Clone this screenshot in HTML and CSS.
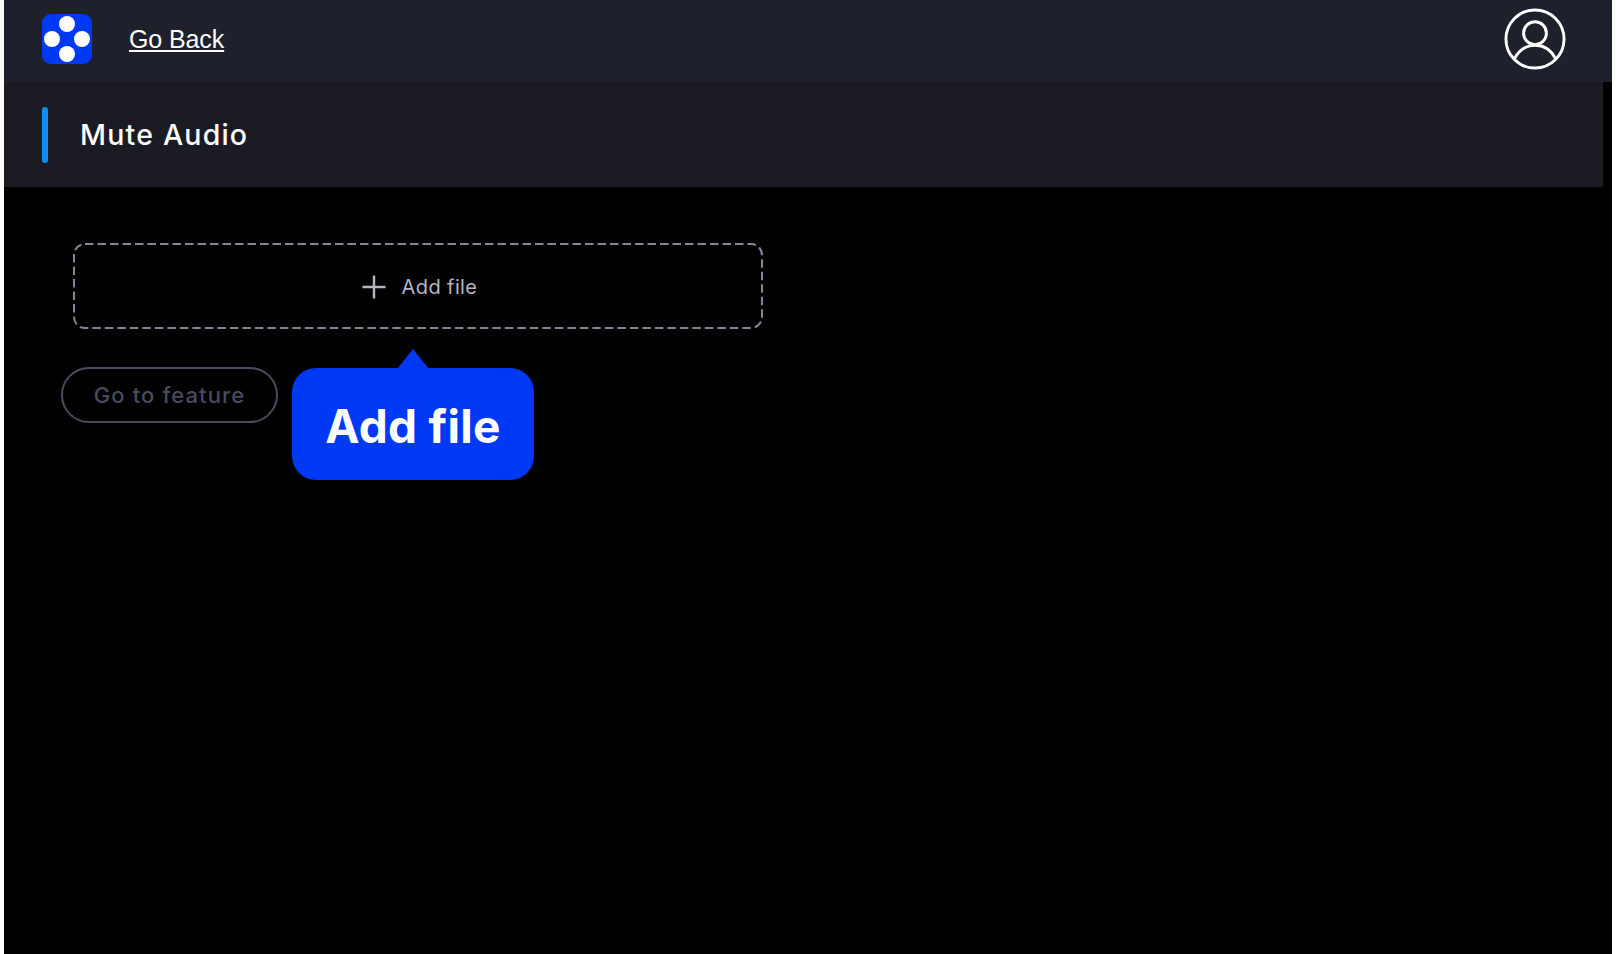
FILE: index.html
```html
<!DOCTYPE html>
<html lang="en">
<head>
<meta charset="utf-8">
<title>Mute Audio</title>
<link rel="stylesheet" href="styles.css">
</head>
<body>
<div class="app">
  <header class="topbar">
    <svg class="logo" viewBox="0 0 50 50" aria-hidden="true">
      <rect width="50" height="50" rx="9" fill="#0039f5"/>
      <circle cx="25" cy="10" r="8" fill="#fff"/>
      <circle cx="10" cy="25" r="8" fill="#fff"/>
      <circle cx="40" cy="25" r="8" fill="#fff"/>
      <circle cx="25" cy="40" r="8" fill="#fff"/>
    </svg>
    <a class="back" href="#">Go Back</a>
    <svg class="avatar" viewBox="0 0 64 64" fill="none" stroke="#fff" stroke-width="3" aria-hidden="true">
      <circle cx="32" cy="32" r="30"/>
      <circle cx="32" cy="26" r="11.800"/>
      <path d="M11 52C15.500 43.500 23 38.500 32 38.500s16.500 5 21 13.500"/>
    </svg>
  </header>
  <section class="titlebar">
    <span class="accent"></span>
    <h1 class="title">Mute Audio</h1>
  </section>
  <main class="content">
    <div class="dropzone">
      <svg class="dash" viewBox="0 0 690 86" fill="none" aria-hidden="true">
        <rect x="1" y="1" width="688" height="84" rx="11" stroke="#85859a" stroke-width="2" stroke-dasharray="8.500 4"/>
      </svg>
      <svg class="plus" viewBox="0 0 24 24" fill="none" stroke="#b4b6c6" stroke-width="2.400" aria-hidden="true">
        <path d="M12 0.500V23.500M0.500 12H23.500"/>
      </svg>
      <span class="drop-label">Add file</span>
    </div>
    <div class="actions">
      <button class="feature" type="button">Go to feature</button>
      <div class="tip">Add file</div>
    </div>
  </main>
</div>
</body>
</html>
```

FILE: styles.css
```css
* { box-sizing: border-box; }
html, body { height: 100%; }
body {
  margin: 0;
  background: #fff;
  overflow: hidden;
  font-family: "Inter", "Liberation Sans", sans-serif;
}
.app {
  margin: 0 4px;
  height: 954px;
  background: #000;
}
.topbar {
  height: 82px;
  background: #1e212c;
  display: flex;
  align-items: center;
  padding: 0 46px 4px 38px;
}
.logo { width: 50px; height: 50px; flex: none; }
.back {
  margin-left: 37px;
  font: 25px "Liberation Sans", Arial, sans-serif;
  letter-spacing: -0.1px;
  color: #fff;
}
.avatar { width: 62px; height: 62px; margin-left: auto; flex: none; }
.titlebar {
  height: 105px;
  margin-right: 9px;
  background: #1b1c23;
  display: flex;
  align-items: center;
  padding-left: 38px;
}
.accent {
  width: 6px;
  height: 56px;
  border-radius: 3px;
  background: #0d8ef0;
}
.title {
  margin: 0 0 0 32px;
  font-size: 28.500px;
  font-weight: 500;
  letter-spacing: 1.200px;
  color: #fff;
}
.content { padding: 56px 0 0 57px; }
.dropzone {
  position: relative;
  margin-left: 12px;
  width: 690px;
  height: 86px;
  padding: 2px 0 0 3px;
  display: flex;
  align-items: center;
  justify-content: center;
  gap: 16px;
}
.dash { position: absolute; inset: 0; width: 100%; height: 100%; }
.plus { width: 24px; height: 24px; }
.drop-label { font-size: 20px; letter-spacing: 0.400px; color: #b4b6c6; }
.actions {
  margin-top: 38px;
  display: flex;
  align-items: flex-start;
  gap: 14px;
}
.feature {
  width: 217px;
  height: 56px;
  border: 2.500px solid #484b5a;
  border-radius: 28px;
  background: transparent;
  color: #484c5e;
  font: 500 22px "Inter", sans-serif;
  letter-spacing: 1.100px;
}
.tip {
  position: relative;
  margin-top: 1px;
  width: 242px;
  height: 112px;
  padding-top: 4px;
  border-radius: 24px;
  background: #0039f5;
  color: #fff;
  font-size: 46px;
  font-weight: 700;
  letter-spacing: 0.300px;
  display: flex;
  align-items: center;
  justify-content: center;
}
.tip::before {
  content: "";
  position: absolute;
  left: 105px;
  top: -19px;
  width: 32px;
  height: 20px;
  background: #0039f5;
  clip-path: polygon(50% 0, 100% 100%, 0 100%);
}
```
